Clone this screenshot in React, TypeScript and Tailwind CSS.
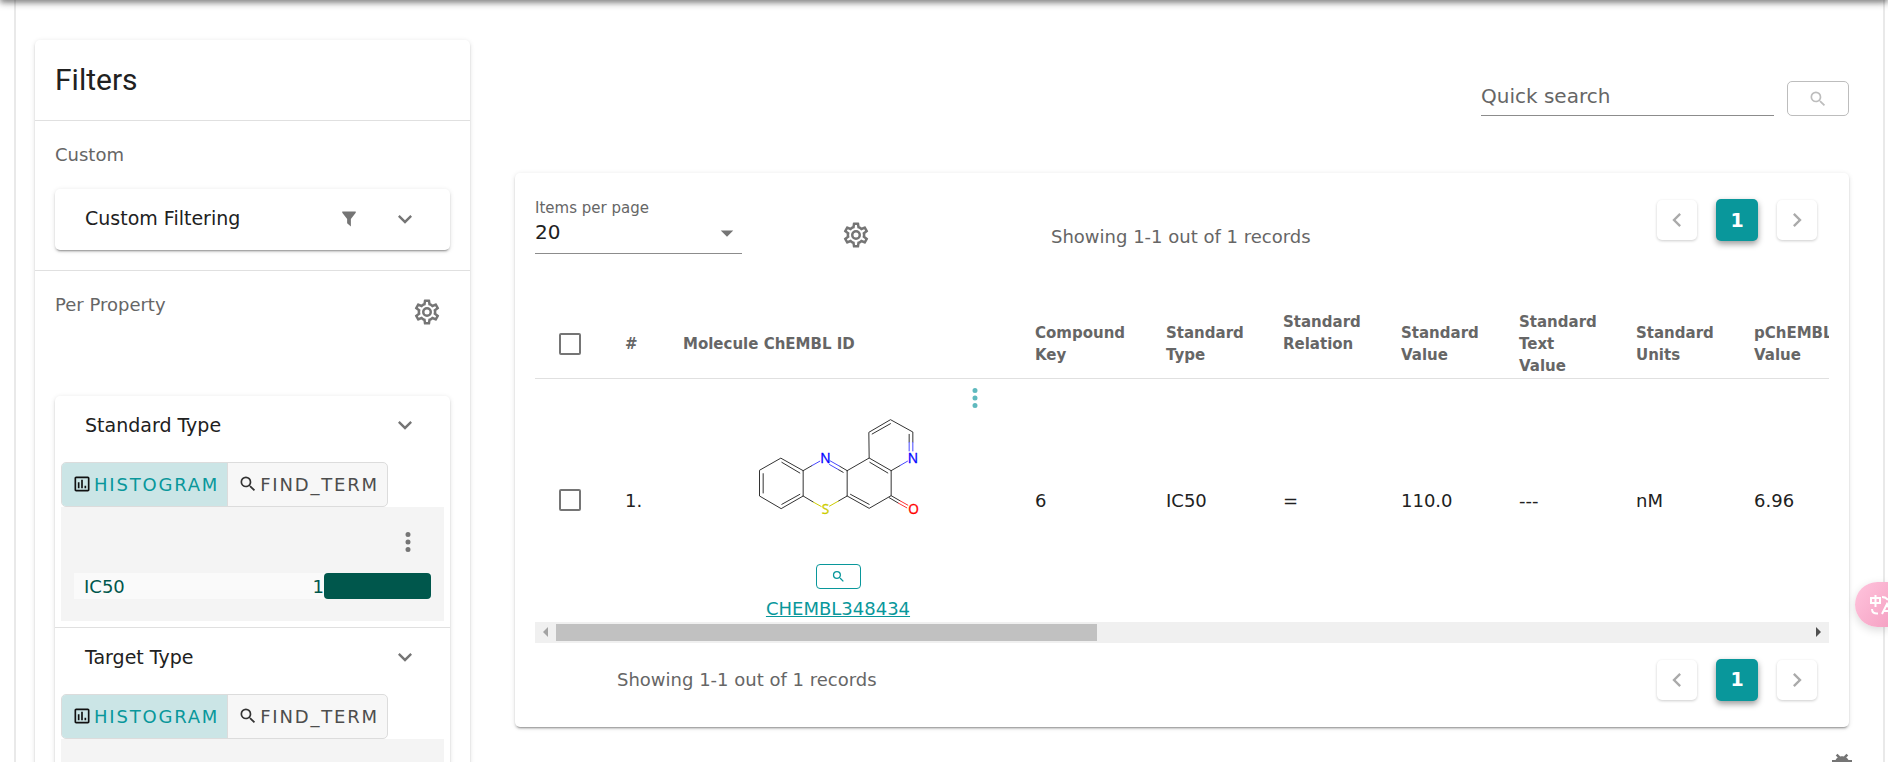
import React from "react";

const P = {
  down: "M7.41,8.58L12,13.17L16.59,8.58L18,10L12,16L6,10L7.41,8.58Z",
  left: "M15.41,16.58L10.83,12L15.41,7.41L14,6L8,12L14,18L15.41,16.58Z",
  right: "M8.59,16.58L13.17,12L8.59,7.41L10,6L16,12L10,18L8.59,16.58Z",
  magnify:
    "M9.5,3A6.5,6.5 0 0,1 16,9.5C16,11.11 15.41,12.59 14.44,13.73L14.71,14H15.5L20.5,19L19,20.5L14,15.5V14.71L13.73,14.44C12.59,15.41 11.11,16 9.5,16A6.5,6.5 0 0,1 3,9.5A6.5,6.5 0 0,1 9.5,3M9.5,5C7,5 5,7 5,9.5C5,12 7,14 9.5,14C12,14 14,12 14,9.5C14,7 12,5 9.5,5Z",
  dots: "M12,16A2,2 0 0,1 14,18A2,2 0 0,1 12,20A2,2 0 0,1 10,18A2,2 0 0,1 12,16M12,10A2,2 0 0,1 14,12A2,2 0 0,1 12,14A2,2 0 0,1 10,12A2,2 0 0,1 12,10M12,4A2,2 0 0,1 14,6A2,2 0 0,1 12,8A2,2 0 0,1 10,6A2,2 0 0,1 12,4Z",
  menuDown: "M7,10L12,15L17,10H7Z",
  cog: "M12,8A4,4 0 0,1 16,12A4,4 0 0,1 12,16A4,4 0 0,1 8,12A4,4 0 0,1 12,8M12,10A2,2 0 0,0 10,12A2,2 0 0,0 12,14A2,2 0 0,0 14,12A2,2 0 0,0 12,10M10,22C9.75,22 9.54,21.82 9.5,21.58L9.13,18.93C8.5,18.68 7.96,18.34 7.44,17.94L4.95,18.95C4.73,19.03 4.46,18.95 4.34,18.73L2.34,15.27C2.21,15.05 2.27,14.78 2.46,14.63L4.57,12.97L4.5,12L4.57,11L2.46,9.37C2.27,9.22 2.21,8.95 2.34,8.73L4.34,5.27C4.46,5.05 4.73,4.96 4.95,5.05L7.44,6.05C7.96,5.66 8.5,5.32 9.13,5.07L9.5,2.42C9.54,2.18 9.75,2 10,2H14C14.25,2 14.46,2.18 14.5,2.42L14.87,5.07C15.5,5.32 16.04,5.66 16.56,6.05L19.05,5.05C19.27,4.96 19.54,5.05 19.66,5.27L21.66,8.73C21.79,8.95 21.73,9.22 21.54,9.37L19.43,11L19.5,12L19.43,13L21.54,14.63C21.73,14.78 21.79,15.05 21.66,15.27L19.66,18.73C19.54,18.95 19.27,19.04 19.05,18.95L16.56,17.95C16.04,18.34 15.5,18.68 14.87,18.93L14.5,21.58C14.46,21.82 14.25,22 14,22H10M11.25,4L10.88,6.61C9.68,6.86 8.62,7.5 7.85,8.39L5.44,7.35L4.69,8.65L6.8,10.2C6.4,11.37 6.4,12.64 6.8,13.8L4.68,15.36L5.43,16.66L7.86,15.62C8.63,16.5 9.68,17.14 10.87,17.38L11.24,20H12.76L13.13,17.39C14.32,17.14 15.37,16.5 16.14,15.62L18.57,16.66L19.32,15.36L17.2,13.81C17.6,12.64 17.6,11.37 17.2,10.2L19.31,8.65L18.56,7.35L16.15,8.39C15.38,7.5 14.32,6.86 13.12,6.62L12.75,4H11.25Z",
  filter: "M3,2H21V3.5L14.5,12V22L9.5,17.5V12L3,3.5Z",
  poll: "M19,3H5C3.9,3 3,3.9 3,5V19C3,20.1 3.9,21 5,21H19C20.1,21 21,20.1 21,19V5C21,3.9 20.1,3 19,3M19,19H5V5H19V19M7,10H9V17H7V10M11,7H13V17H11V7M15,14H17V17H15V14Z",
  bug: "M20,8H17.19C16.74,7.2 16.12,6.5 15.37,6L17,4.41L15.59,3L13.42,5.17C12.96,5.06 12.49,5 12,5C11.51,5 11.04,5.06 10.59,5.17L8.41,3L7,4.41L8.62,6C7.88,6.5 7.26,7.21 6.81,8H4V10H6.09C6.03,10.33 6,10.66 6,11V12H4V14H6V15H20V14H18V11C18,10.66 17.96,10.33 17.91,10H20V8Z",
};

function Icon({ d, className }: { d: string; className: string }) {
  return (
    <svg viewBox="0 0 24 24" aria-hidden="true" className={`shrink-0 ${className}`} fill="currentColor">
      <path d={d} />
    </svg>
  );
}

const card = "rounded-[5px] bg-white shadow-[0_3px_1px_-2px_rgba(0,0,0,0.2),0_2px_2px_0_rgba(0,0,0,0.14),0_1px_5px_0_rgba(0,0,0,0.12)]";

function PropertyPanel({ title, children }: { title: string; children?: React.ReactNode }) {
  return (
    <section className="border-b border-[#e0e0e0] px-[6px] pb-[6px]">
      <button type="button" className="flex h-[58px] w-full items-center justify-between pr-[25px] pl-6 text-left text-[19px] text-[#212121]">
        {title}
        <Icon d={P.down} className="size-7 text-[#757575]" />
      </button>
      <div className="mt-2 inline-flex h-[45px] rounded-[5px] border border-[#dcdcdc] bg-[#f7f7f7] align-top text-[18px]">
        <button type="button" className="flex items-center rounded-l-[4px] border-r border-[#dcdcdc] bg-[#cbe5e6] pr-2 pl-[10px] tracking-widest text-[#09979b]">
          <Icon d={P.poll} className="mr-[2px] mb-[2px] size-5 text-[#111]" />
          HISTOGRAM
        </button>
        <button type="button" className="flex items-center pr-2 pl-[10px] tracking-widest text-[#4d4d4d]">
          <Icon d={P.magnify} className="mr-[2px] mb-[2px] size-5 text-[#333]" />
          FIND_TERM
        </button>
      </div>
      <div className="h-[114px] bg-[#f4f4f4] px-[13px]">{children}</div>
    </section>
  );
}

function Molecule() {
  return (
    <svg viewBox="46 108 500 420" className="h-[140px] w-[167px]" role="img" aria-label="CHEMBL348434 structure">
      <g fill="none" stroke="#333" strokeWidth="3" strokeLinejoin="round" strokeLinecap="round">
        <path d="M124,235L190,272V348L124,386L59,348V272Z" />
        <path d="M126,247L180,279M70,281V339M126,373L180,343" />
        <path d="M190,272L216,257M190,348L220,366M322,272V348L296,363" />
        <path d="M322,272L388,234L454,272V347L388,385L322,348M332,343L388,373M390,247L444,279" />
        <path d="M388,234L387,157L452,119L519,156V186M397,162L452,131M508,163V186M454,272L480,257" />
        <path d="M322,272L300,259M310,277L296,269" />
        <path d="M454,347L480,362M448,353L475,369" />
      </g>
      <g fill="none" stroke="#4848ff" strokeWidth="3">
        <path d="M216,257L241,243M300,259L270,242M296,269L268,253M519,186V214M508,186V214M480,257L504,243" />
      </g>
      <path d="M220,366L245,380M296,363L268,379" stroke="#cccc00" strokeWidth="3" />
      <path d="M480,362L505,376M475,369L502,384" stroke="#ff3333" strokeWidth="3" />
      <g fontSize="41" strokeWidth="1" textAnchor="middle" className="font-['Open_Sans',sans-serif]">
        <text x="257" y="250" fill="#0000ff" stroke="#0000ff">N</text>
        <text x="519" y="248" fill="#0000ff" stroke="#0000ff">N</text>
        <text x="257" y="402" fill="#cccc00" stroke="#cccc00">S</text>
        <text x="521" y="401" fill="#ff0000" stroke="#ff0000">O</text>
      </g>
    </svg>
  );
}

function Pagination() {
  const side = "flex size-10 items-center justify-center rounded-[5px] bg-white text-[#aaa] shadow-[0_1px_3px_rgba(0,0,0,0.2)]";
  return (
    <nav aria-label="Pages" className="flex items-center gap-[19px]">
      <button type="button" aria-label="Previous page" className={side}>
        <Icon d={P.left} className="size-7" />
      </button>
      <button type="button" className="size-[42px] rounded-[5px] bg-[#09979b] text-[19px] font-bold text-white shadow-[0_3px_6px_rgba(0,0,0,0.4)]">
        1
      </button>
      <button type="button" aria-label="Next page" className={side}>
        <Icon d={P.right} className="size-7" />
      </button>
    </nav>
  );
}

const columns: { lines: string[]; value: string }[] = [
  { lines: ["Compound", "Key"], value: "6" },
  { lines: ["Standard", "Type"], value: "IC50" },
  { lines: ["Standard", "Relation", "\u00a0"], value: "=" },
  { lines: ["Standard", "Value"], value: "110.0" },
  { lines: ["Standard", "Text", "Value"], value: "---" },
  { lines: ["Standard", "Units"], value: "nM" },
  { lines: ["pChEMBL", "Value"], value: "6.96" },
];

const checkbox = "block size-[22px] appearance-none rounded-[2px] border-2 border-[#757575] bg-white";

export default function App() {
  return (
    <div className="relative h-screen overflow-hidden bg-white font-['DejaVu_Sans',Verdana,sans-serif] text-[#212121]">
      <div className="absolute inset-x-0 -top-2 z-10 h-2 shadow-[0_2px_4px_-1px_rgba(0,0,0,0.2),0_4px_5px_0_rgba(0,0,0,0.14),0_1px_10px_0_rgba(0,0,0,0.4)]" />
      <div className="mr-[3px] ml-[14px] flex h-full items-start border-x-2 border-[#e9e9e9] pr-[34px] pl-[19px]">
        <aside className={`mt-10 w-[435px] shrink-0 ${card}`}>
          <h2 className="flex h-[81px] items-center border-b border-[#e0e0e0] px-5 pb-[2px] font-[Roboto,sans-serif] text-[30px]">Filters</h2>
          <section className="border-b border-[#e0e0e0] px-5 pt-[22px] pb-5">
            <h3 className="text-[18px] leading-6 text-[#666]">Custom</h3>
            <button type="button" className={`mt-[22px] flex h-[61px] w-full items-center pr-[31px] pb-[2px] pl-[30px] text-[19px] ${card}`}>
              <span className="grow text-left">Custom Filtering</span>
              <Icon d={P.filter} className="mr-[33px] size-[18px] text-[#757575]" />
              <Icon d={P.down} className="size-7 text-[#757575]" />
            </button>
          </section>
          <section className="px-5 pt-[22px]">
            <div className="flex h-[103px] items-start justify-between pr-2">
              <h3 className="text-[18px] leading-6 text-[#666]">Per Property</h3>
              <button type="button" aria-label="Property settings" className="mt-1 text-[#757575]">
                <Icon d={P.cog} className="block size-[30px]" />
              </button>
            </div>
            <div className={card}>
              <PropertyPanel title="Standard Type">
                <div className="flex h-[66px] items-center justify-end pt-[3px] pr-2">
                  <button type="button" aria-label="Histogram options" className="text-[#757575]">
                    <Icon d={P.dots} className="block size-[30px]" />
                  </button>
                </div>
                <div className="flex h-[26px] items-center bg-[#fafafa] pl-[10px] text-[18px] text-[#00574c]">
                  <span className="grow">IC50</span>
                  <span>1</span>
                  <span className="h-full w-[107px] rounded-[4px] bg-[#00574c]" />
                </div>
              </PropertyPanel>
              <PropertyPanel title="Target Type" />
            </div>
          </section>
        </aside>

        <main className="ml-[45px] min-w-0 grow">
          <form className="mt-[80px] flex items-start justify-end gap-[13px]">
            <input
              type="text"
              aria-label="Quick search"
              placeholder="Quick search"
              className="h-9 w-[293px] border-b border-[#8c8c8c] bg-transparent pb-1 text-[20px] outline-none placeholder:text-[#666] placeholder:opacity-100"
            />
            <button type="button" aria-label="Search" className="mt-px flex h-[35px] w-[62px] items-center justify-center rounded-[5px] border border-[#bdbdbd] text-[#bdbdbd]">
              <Icon d={P.magnify} className="size-5" />
            </button>
          </form>

          <section className={`mt-[57px] px-5 pb-[26px] ${card}`}>
            <div className="flex h-[135px] items-start pt-[26px]">
              <div className="relative w-[207px]">
                <label htmlFor="per-page" className="block h-4 text-[15px] leading-[18px] text-[#666]">
                  Items per page
                </label>
                <select id="per-page" className="h-[39px] w-full appearance-none border-b border-[#8c8c8c] bg-transparent pb-1 text-[20px]">
                  <option>20</option>
                </select>
                <Icon d={P.menuDown} className="pointer-events-none absolute right-0 bottom-[6px] size-[30px] text-[#757575]" />
              </div>
              <button type="button" aria-label="Table settings" className="mt-[21px] ml-[99px] text-[#757575]">
                <Icon d={P.cog} className="block size-[30px]" />
              </button>
              <p className="mt-[26px] ml-[180px] grow text-[18px] leading-6 text-[#666]">Showing 1-1 out of 1 records</p>
              <div className="mr-3">
                <Pagination />
              </div>
            </div>

            <div className="overflow-hidden">
              <table className="w-[1321px] table-fixed border-collapse text-left">
                <colgroup>
                  <col className="w-[74px]" />
                  <col className="w-[58px]" />
                  <col className="w-[352px]" />
                  <col className="w-[131px]" />
                  <col className="w-[117px]" />
                  <col className="w-[118px]" />
                  <col className="w-[118px]" />
                  <col className="w-[117px]" />
                  <col className="w-[118px]" />
                  <col className="w-[118px]" />
                </colgroup>
                <thead>
                  <tr className="h-[70px] border-b border-[#e0e0e0] text-[15px] leading-[22px] text-[#666]">
                    <th className="pt-[2px] pl-6">
                      <input type="checkbox" aria-label="Select all" className={checkbox} />
                    </th>
                    <th className="pt-[3px] pl-4">#</th>
                    <th className="pt-[3px] pl-4">Molecule ChEMBL ID</th>
                    {columns.map((c) => (
                      <th key={c.lines.join(" ")} className="pt-[3px] pl-4">
                        {c.lines.map((l) => (
                          <span key={l} className="block">
                            {l}
                          </span>
                        ))}
                      </th>
                    ))}
                  </tr>
                </thead>
                <tbody>
                  <tr className="text-[18px]">
                    <td className="pl-6">
                      <input type="checkbox" aria-label="Select row 1" className={checkbox} />
                    </td>
                    <td className="pl-4">1.</td>
                    <td className="pt-px pr-[26px] pb-px pl-4">
                      <div className="flex flex-col items-center">
                        <button type="button" aria-label="Molecule options" className="flex size-9 items-center justify-center self-end text-[#5fb9be]">
                          <Icon d={P.dots} className="size-[30px]" />
                        </button>
                        <Molecule />
                        <button type="button" aria-label="Enlarge structure" className="mt-2 flex h-[25px] w-[45px] items-center justify-center rounded-[4px] border border-[#09979b] text-[#09979b]">
                          <Icon d={P.magnify} className="size-[15px]" />
                        </button>
                        <a href="#CHEMBL348434" className="mt-2 leading-6 text-[#09979b] underline">
                          CHEMBL348434
                        </a>
                      </div>
                    </td>
                    {columns.map((c) => (
                      <td key={c.lines.join(" ")} className="pl-4">
                        {c.value}
                      </td>
                    ))}
                  </tr>
                </tbody>
              </table>
            </div>
            <div className="flex h-[21px] items-center justify-between bg-[#f0f0f0] px-2">
              <svg viewBox="0 0 5 10" className="h-[10px] w-[5px]" fill="#a3a3a3" aria-hidden="true">
                <path d="M5,0V10L0,5Z" />
              </svg>
              <div className="mr-auto ml-2 h-[17px] w-[541px] bg-[#c1c1c1]" />
              <svg viewBox="0 0 5 10" className="h-[10px] w-[5px]" fill="#505050" aria-hidden="true">
                <path d="M0,0V10L5,5Z" />
              </svg>
            </div>

            <div className="mt-4 flex items-center justify-between pr-3 pl-[82px]">
              <p className="text-[18px] leading-6 text-[#666]">Showing 1-1 out of 1 records</p>
              <Pagination />
            </div>
          </section>

          <div className="mt-[23px] -mr-2 flex justify-end">
            <button type="button" aria-label="Report a bug" className="text-[#757575]">
              <Icon d={P.bug} className="block size-[30px]" />
            </button>
          </div>
        </main>
      </div>

      <button
        type="button"
        aria-label="Translate"
        className="absolute top-[582px] right-0 flex h-[45px] w-[33px] items-center overflow-hidden rounded-l-full bg-linear-to-br from-[#ffc4dd] to-[#f5a3c4] pl-[15px] shadow-[0_3px_10px_rgba(0,0,0,0.15)]"
      >
        <svg viewBox="0 0 18 22" className="h-[22px] w-[18px] shrink-0" fill="none" stroke="#fff" strokeWidth="2" aria-hidden="true">
          <path d="M1,4H10V9H1ZM5.500,1V13M2,15Q2,20 8,19.500M12,3Q16,3 18,6M12,20L17,10L22,20M14,17H20" />
        </svg>
      </button>
    </div>
  );
}
